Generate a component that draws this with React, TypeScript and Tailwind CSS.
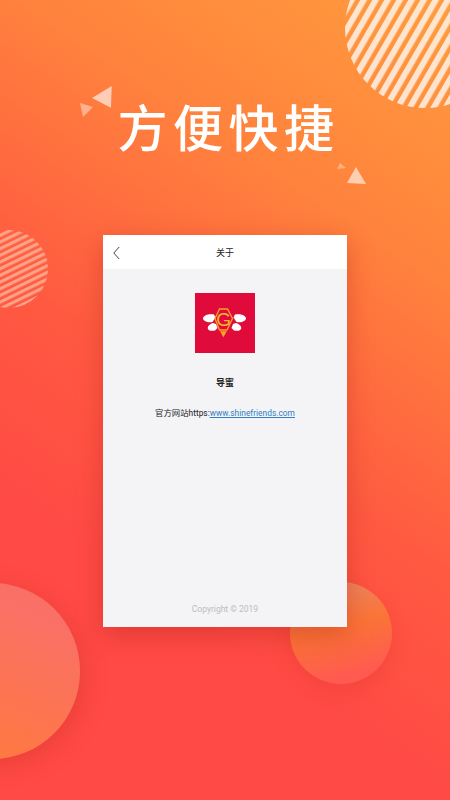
const cjk = "font-['Roboto','Noto_Sans_CJK_SC',sans-serif]";

function Decorations() {
  return (
    <svg className="absolute inset-0 h-[800px] w-[450px]" viewBox="0 0 450 800">
      <defs>
        <pattern id="stripesTop" width="10.4" height="10.4" patternUnits="userSpaceOnUse" patternTransform="rotate(30)">
          <rect width="6" height="10.4" fill="#ffe8d6" fillOpacity="0.95" />
        </pattern>
        <pattern id="stripesLeft" width="6" height="6" patternUnits="userSpaceOnUse" patternTransform="rotate(-26)">
          <rect width="6" height="3.2" fill="#ffb398" fillOpacity="0.8" />
        </pattern>
      </defs>
      <circle cx="425" cy="28" r="80" fill="url(#stripesTop)" />
      <circle cx="9" cy="269" r="39" fill="url(#stripesLeft)" />
      <polygon points="111.7,86 92,98 111,107.7" fill="#fff" fillOpacity="0.62" />
      <polygon points="80,103 93,107 83,117" fill="#fff" fillOpacity="0.42" />
      <polygon points="356,167 347,183 366,184" fill="#fff" fillOpacity="0.6" />
      <polygon points="340,163 346,168 337,169" fill="#fff" fillOpacity="0.35" />
    </svg>
  );
}

function BeeLogo() {
  return (
    <svg className="h-[60px] w-[60px]" viewBox="0 0 60 60">
      <rect width="60" height="60" fill="#e00b3a" />
      <path d="M8 25c1-3 6-4.500 11-3.500l1.500 3-3 4.500c-5 1-9.500-1-9.500-4z" fill="#fff" />
      <path d="M13 36c-1-2 1-4.500 5-6l3 1 1.500 4-2.500 2.500c-3 .5-6 .5-7-1.500z" fill="#fff" />
      <path d="M51 25c-1-3-6-4.500-11-3.500l-1.500 3 3 4.500c5 1 9.500-1 9.500-4z" fill="#fff" />
      <path d="M46 36c1-2-1-4.500-5-6l-3 1-1.500 4 2.500 2.500c3 .5 6 .5 7-1.500z" fill="#fff" />
      <path d="M20 25.500 24.500 16h8l5 9.500-5.500 11.500h-7.500z" fill="#e00b3a" stroke="#f5a524" strokeWidth="1.300" />
      <path d="M25 38.200h6.800l-3.400 6z" fill="#f5a524" />
      <text x="28.700" y="33" textAnchor="middle" fontSize="19" fontWeight="400" fill="#f7b733" fontFamily="Liberation Sans, sans-serif">G</text>
    </svg>
  );
}

export default function App() {
  return (
    <div className={`relative h-[800px] w-[450px] overflow-hidden bg-[linear-gradient(214deg,#ff9c3d_0%,#ff823d_26%,#ff5a41_52%,#ff4a45_72%,#ff4a45_100%)] ${cjk}`}>
      <Decorations />

      {/* round shapes at the bottom */}
      <div className="absolute left-[-96px] top-[583px] h-[176px] w-[176px] rounded-full bg-[linear-gradient(25deg,#ff7a3e_10%,#fa7066_80%)] shadow-[4px_6px_24px_rgba(190,40,30,0.3)]" />
      <div className="absolute left-[290px] top-[582px] h-[102px] w-[102px] rounded-full bg-[linear-gradient(165deg,#e88a70_0%,#fb7437_45%,#ff5a50_85%)] shadow-[0_6px_20px_rgba(200,40,30,0.22)]" />

      <div className="relative flex flex-col items-center pt-[93px]">
        <h1 className="h-[64px] pl-[7px] text-[50px] font-medium leading-[64px] tracking-[5.5px] text-white font-['Noto_Sans_CJK_SC',sans-serif]">
          方便快捷
        </h1>

        <div className="mt-[78px] flex h-[392px] w-[244px] flex-col bg-[#f4f3f6] shadow-[0_8px_24px_rgba(170,30,20,0.35)]">
          <div className="relative flex h-[34px] items-center justify-center bg-white pt-[3px]">
            <svg className="absolute left-[9px] top-[11px] h-[14px] w-[9px]" viewBox="0 0 9 14">
              <path d="M7.200 1 1.800 7l5.400 6" fill="none" stroke="#444" strokeWidth="1" />
            </svg>
            <span className="text-[9px] text-[#222]">关于</span>
          </div>

          <div className="flex flex-1 flex-col items-center pt-6">
            <BeeLogo />
            <div className="mt-6 text-[9px] font-bold leading-[12px] text-[#222]">导蜜</div>
            <div className="mt-[18px] text-[8.4px] leading-[12px] text-[#222]">
              官方网站https:<span className="text-[#2f7fc4] underline">www.shinefriends.com</span>
            </div>
            <div className="mt-auto pb-3 text-[8.5px] leading-[12px] text-[#bdbcc0]">Copyright © 2019</div>
          </div>
        </div>
      </div>
    </div>
  );
}
